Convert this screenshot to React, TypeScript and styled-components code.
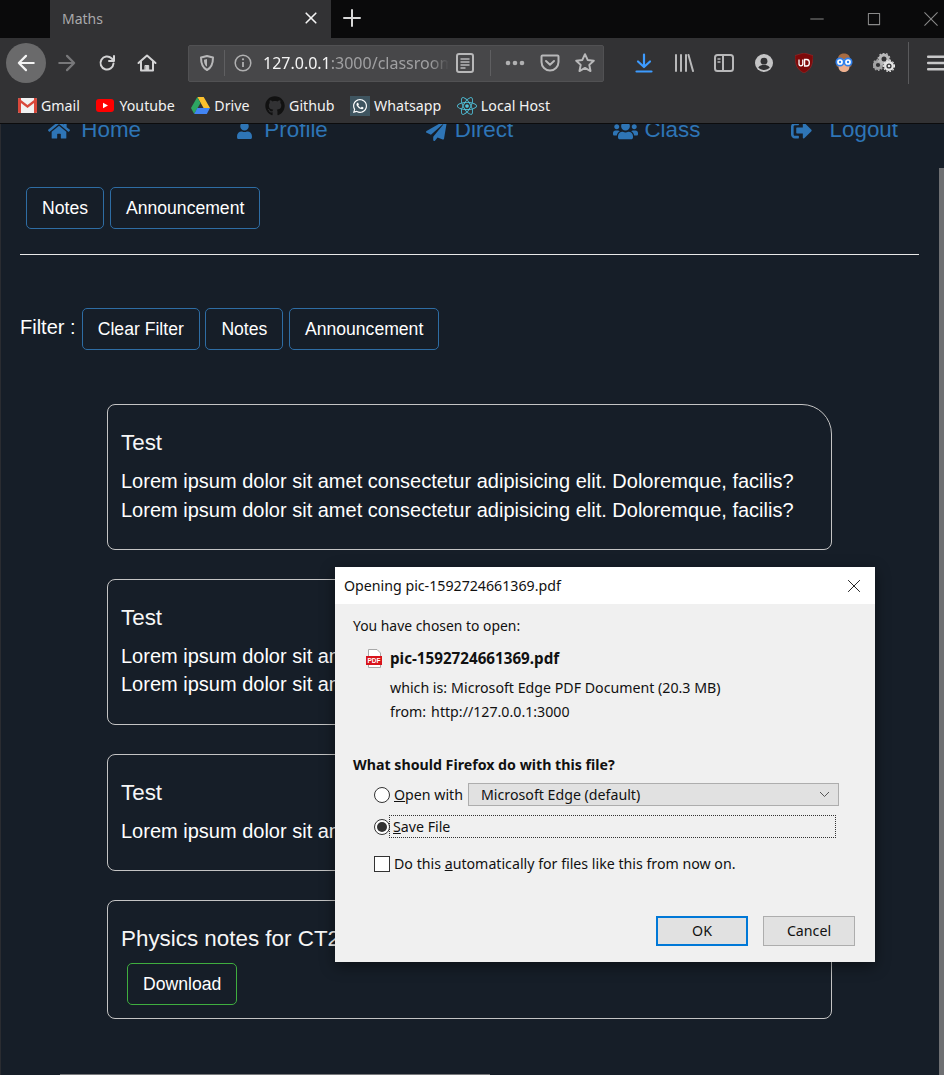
import React from "react"
import styled, { createGlobalStyle } from "styled-components"
import { FaGithub, FaHome, FaPaperPlane, FaReact, FaSignOutAlt, FaUser, FaUsers, FaWhatsapp } from "react-icons/fa"

const GlobalStyle = createGlobalStyle`
  html, body {
    margin: 0;
    padding: 0;
    background: #161e28;
  }
  * {
    box-sizing: border-box;
  }
`

const UI_FONT = `"Noto Sans", "Open Sans", sans-serif`
const PAGE_FONT = `"Liberation Sans", Arial, sans-serif`

const S = {
  Frame: styled.div`
    width: 944px;
    height: 1075px;
    display: flex;
    flex-direction: column;
    overflow: hidden;
    background: #161e28;
  `,
  Chrome: styled.header`
    flex: none;
    height: 124px;
    background: #323234;
    border-bottom: 1px solid #0c0c0d;
    font-family: ${UI_FONT};
    position: relative;
    z-index: 2;
  `,
  TabBar: styled.div`
    height: 38px;
    display: flex;
    align-items: center;
    padding-left: 50px;
    background: #0a0a0b;
  `,
  Tab: styled.div`
    width: 281px;
    height: 38px;
    display: flex;
    align-items: center;
    justify-content: space-between;
    padding: 0 12px 2px;
    background: #323234;
    color: #a9a9ab;
    font-size: 14px;
  `,
  NewTab: styled.div`
    width: 42px;
    height: 38px;
    padding-bottom: 2px;
    display: flex;
    align-items: center;
    justify-content: center;
  `,
  WindowControls: styled.div`
    margin-left: auto;
    display: flex;
    margin-right: -15px;
  `,
  WindowButton: styled.div`
    width: 57px;
    height: 36px;
    display: flex;
    align-items: center;
    justify-content: center;
  `,
  Toolbar: styled.div`
    height: 47px;
    display: flex;
    align-items: center;
    padding: 3px 0 0 6px;
    overflow: hidden;
  `,
  ToolButton: styled.div<{ $round?: boolean }>`
    flex: none;
    width: 40px;
    height: 40px;
    display: flex;
    align-items: center;
    justify-content: center;
    border-radius: 50%;
    background: ${(p) => (p.$round ? "#6a6a6b" : "transparent")};
    margin-right: ${(p) => (p.$round ? "1px" : "0")};
  `,
  UrlBar: styled.div`
    flex: none;
    width: 416px;
    height: 37px;
    margin: 0 20px 0 21px;
    display: flex;
    align-items: center;
    background: #474749;
    border: 1px solid #515153;
    border-radius: 2px;
  `,
  UrlSlot: styled.div<{ $width: number }>`
    flex: none;
    width: ${(p) => p.$width}px;
    height: 100%;
    display: flex;
    align-items: center;
    justify-content: center;
  `,
  UrlDivider: styled.div`
    flex: none;
    width: 1px;
    height: 26px;
    background: #5f5f61;
  `,
  UrlText: styled.div`
    flex: none;
    width: 186px;
    margin-left: 2px;
    overflow: hidden;
    white-space: nowrap;
    font-size: 16px;
    color: #a0a0a2;
    -webkit-mask-image: linear-gradient(to right, #000 90%, transparent);
    mask-image: linear-gradient(to right, #000 90%, transparent);
    b {
      font-weight: 400;
      color: #f4f4f4;
    }
  `,
  ToolDivider: styled.div`
    flex: none;
    width: 1px;
    height: 42px;
    margin: 0 7px 0 4px;
    background: #5a5a5c;
  `,
  Bookmarks: styled.nav`
    height: 38px;
    display: flex;
    align-items: center;
    gap: 15.6px;
    padding: 3px 0 0 17px;
  `,
  Bookmark: styled.div`
    display: flex;
    align-items: center;
    gap: 4px;
    font-size: 14.2px;
    color: #f2f2f2;
    white-space: nowrap;
  `,
  BookmarkIcon: styled.span<{ $bg?: string }>`
    width: 20px;
    height: 20px;
    display: flex;
    align-items: center;
    justify-content: center;
    background: ${(p) => p.$bg || "transparent"};
  `,
  Page: styled.main`
    flex: 1;
    position: relative;
    overflow: hidden;
    padding-left: 1px;
    border-left: 1px solid #2a2c31;
    font-family: ${PAGE_FONT};
    color: #fff;
  `,
  SiteNav: styled.nav`
    display: grid;
    grid-template-columns: repeat(5, 1fr);
    width: 937px;
    margin: -7px 0 0 -1px;
  `,
  NavLink: styled.a<{ $gap: number }>`
    display: flex;
    align-items: center;
    justify-content: center;
    gap: ${(p) => p.$gap}px;
    font-size: 22.4px;
    line-height: 26px;
    color: #2e75b6;
  `,
  ButtonRow: styled.div`
    display: flex;
    align-items: center;
    gap: 6px;
    margin: 44px 0 0 24px;
  `,
  FilterRow: styled.div`
    display: flex;
    align-items: center;
    gap: 5.6px;
    margin: 53px 0 0 18px;
  `,
  FilterLabel: styled.span`
    font-size: 20px;
    margin: -3px 0.6px 0 0;
  `,
  OutlineButton: styled.button<{ $tone?: string }>`
    height: 42px;
    padding: 0 15px;
    background: transparent;
    border: 1px solid ${(p) => p.$tone || "#2e6da4"};
    border-radius: 5px;
    color: #fff;
    font-family: ${PAGE_FONT};
    font-size: 17.6px;
  `,
  Divider: styled.hr`
    width: 899px;
    height: 1px;
    margin: 25px 0 0 18px;
    border: 0;
    background: #e8e8e8;
  `,
  CardList: styled.section`
    display: flex;
    flex-direction: column;
    gap: 28.8px;
    width: 725px;
    margin: 54px 0 0 105px;
  `,
  Card: styled.article<{ $first?: boolean }>`
    padding: 25px 13px 13px;
    border: 1px solid #c4c4c4;
    border-radius: ${(p) => (p.$first ? "8px 30px 8px 8px" : "8px")};
  `,
  CardTitle: styled.h3`
    margin: 0;
    font-size: 22.4px;
    line-height: 26px;
    font-weight: 400;
    color: #f6f6f6;
  `,
  CardBody: styled.p`
    margin: 11px 0 12px;
    font-size: 20px;
    line-height: 1.42857;
    color: #fff;
  `,
  DownloadRow: styled.div`
    margin: 11px 0 0 6px;
  `,
  ScrollThumb: styled.div`
    position: absolute;
    top: 44px;
    right: 0;
    bottom: 0;
    width: 5px;
    background: #6e6f72;
  `,
  ScrollBottom: styled.div`
    position: absolute;
    left: 59px;
    bottom: 0;
    width: 430px;
    height: 1px;
    background: #77787b;
  `,
  Dialog: styled.div`
    position: absolute;
    left: 334px;
    top: 443px;
    width: 540px;
    height: 395px;
    background: #f0f0f0;
    box-shadow: 0 4px 14px rgba(0, 0, 0, 0.45);
    font-family: ${UI_FONT};
    font-size: 14.2px;
    color: #111;
    display: flex;
    flex-direction: column;
  `,
  DialogTitle: styled.div`
    flex: none;
    height: 37px;
    display: flex;
    align-items: center;
    justify-content: space-between;
    padding: 0 14px 0 9px;
    background: #fff;
  `,
  DialogBody: styled.div`
    flex: 1;
    display: flex;
    flex-direction: column;
    padding: 12px 20px 16px 18px;
  `,
  Intro: styled.div`
    font-size: 13.9px;
  `,
  FileRow: styled.div`
    display: flex;
    align-items: center;
    gap: 7px;
    margin: 13px 0 0 13px;
    font-weight: 700;
    font-size: 15.2px;
  `,
  MetaRow: styled.div<{ $gap: number; $top: number }>`
    display: flex;
    gap: ${(p) => p.$gap}px;
    margin: ${(p) => p.$top}px 0 0 37px;
  `,
  Question: styled.div`
    margin-top: 34px;
    font-weight: 700;
  `,
  ChoiceRow: styled.div<{ $top: number }>`
    display: flex;
    align-items: center;
    margin: ${(p) => p.$top}px 0 0 21px;
    height: 23px;
  `,
  Radio: styled.span<{ $checked?: boolean }>`
    flex: none;
    width: 16px;
    height: 16px;
    border: 1px solid #333;
    border-radius: 50%;
    background: #fff;
    margin-right: 4px;
    display: flex;
    align-items: center;
    justify-content: center;
    &::after {
      content: "";
      width: 10px;
      height: 10px;
      border-radius: 50%;
      background: ${(p) => (p.$checked ? "#333" : "transparent")};
    }
  `,
  Check: styled.span`
    flex: none;
    width: 16px;
    height: 16px;
    border: 1px solid #333;
    background: #fff;
    margin-right: 4px;
  `,
  ChoiceLabel: styled.span`
    flex: none;
    width: 74px;
  `,
  SelectBox: styled.div`
    flex: none;
    width: 371px;
    height: 23px;
    padding: 0 8px 0 12px;
    display: flex;
    align-items: center;
    justify-content: space-between;
    background: #e1e1e1;
    border: 1px solid #adadad;
  `,
  Focused: styled.div`
    flex: none;
    width: 447px;
    height: 23px;
    margin-left: -5px;
    padding-left: 4px;
    display: flex;
    align-items: center;
    outline: 1px dotted #333;
    outline-offset: -1px;
  `,
  DialogActions: styled.div`
    margin-top: auto;
    display: flex;
    justify-content: flex-end;
    gap: 15px;
  `,
  DialogButton: styled.button<{ $primary?: boolean }>`
    width: 92px;
    height: 30px;
    padding: 0 0 2px;
    background: #e1e1e1;
    border: ${(p) => (p.$primary ? "2px solid #0078d7" : "1px solid #adadad")};
    color: #111;
    font-family: ${UI_FONT};
    font-size: 14.2px;
  `,
}

const Line: React.FC<{ d: string; color?: string; w?: number; size?: number }> = ({ d, color = "#d0d0d1", w = 2, size = 20 }) => (
  <svg width={size} height={size} viewBox="0 0 20 20" fill="none" stroke={color} strokeWidth={w} strokeLinecap="round" strokeLinejoin="round">
    <path d={d} />
  </svg>
)

const GmailIcon = () => (
  <svg width="19" height="15" viewBox="0 0 19 15">
    <rect width="19" height="15" rx="1.5" fill="#f1f1f1" />
    <path d="M0 1.5C0 .6.6 0 1.5 0H3v15H1.5C.6 15 0 14.400 0 13.500zM19 1.500C19 .6 18.400 0 17.500 0H16v15h1.500c.9 0 1.500-.6 1.500-1.500z" fill="#d9483b" />
    <path d="M1 0.500 9.500 7 18 .5v3L9.500 10 1 3.500z" fill="#d9483b" />
  </svg>
)

const YoutubeIcon = () => (
  <svg width="18" height="13" viewBox="0 0 18 13">
    <rect width="18" height="13" rx="3" fill="#f00" />
    <path d="M7 3.700 12 6.500 7 9.300z" fill="#fff" />
  </svg>
)

const DriveIcon = () => (
  <svg width="19" height="17" viewBox="0 0 19 17">
    <path d="M6.300 0h6.400l6.300 11h-6.400z" fill="#fbc02d" />
    <path d="M6.300 0 0 11l3.200 6 6.300-11z" fill="#2da562" />
    <path d="M3.200 17h12.600l3.200-6H6.400z" fill="#4285f4" />
  </svg>
)

const ShieldIcon = () => (
  <svg width="18" height="18" viewBox="0 0 18 18" fill="none">
    <path d="M9 2 3 3.500c0 6 1 10 6 12.500 5-2.500 6-6.500 6-12.500z" stroke="#b8b8b9" strokeWidth="2" strokeLinejoin="round" />
    <path d="M9 5 6 5.800c0 3 .6 5.500 3 7z" fill="#b8b8b9" />
  </svg>
)

const InfoIcon = () => (
  <svg width="18" height="18" viewBox="0 0 18 18" fill="none">
    <circle cx="9" cy="9" r="7.800" stroke="#b0b0b1" strokeWidth="1.500" />
    <path d="M9 8v5" stroke="#b0b0b1" strokeWidth="1.800" />
    <circle cx="9" cy="5.300" r="1.100" fill="#b0b0b1" />
  </svg>
)

const ReaderIcon = () => (
  <svg width="18" height="20" viewBox="0 0 18 20" fill="none" stroke="#b8b8b9">
    <rect x="1" y="1" width="16" height="18" rx="2" strokeWidth="2" />
    <path d="M4.500 6h9M4.500 9h9M4.500 12h9M4.500 15h5" strokeWidth="1.300" />
  </svg>
)

const DotsIcon = () => (
  <svg width="20" height="6" viewBox="0 0 20 6" fill="#b0b0b1">
    <circle cx="3" cy="3" r="2.300" />
    <circle cx="10" cy="3" r="2.300" />
    <circle cx="17" cy="3" r="2.300" />
  </svg>
)

const PocketIcon = () => (
  <svg width="20" height="18" viewBox="0 0 20 18" fill="none" stroke="#b8b8b9" strokeLinecap="round" strokeLinejoin="round">
    <path d="M2.500 1.500h15c.6 0 1 .4 1 1V8c0 4.500-3.800 8.500-8.500 8.500S1.500 12.500 1.500 8V2.500c0-.6.4-1 1-1z" strokeWidth="2" />
    <path d="M6 7l4 3.700L14 7" strokeWidth="2" />
  </svg>
)

const StarIcon = () => <Line size={22} d="M10 2l2.400 5.200 5.600.7-4.100 3.800 1.100 5.600L10 14.500l-5 2.800 1.100-5.600L2 7.900l5.600-.7z" color="#b8b8b9" w={1.800} />

const DownloadIcon = () => (
  <svg width="18" height="20" viewBox="0 0 18 20" fill="none" stroke="#3d9bff" strokeWidth="2.200" strokeLinecap="round" strokeLinejoin="round">
    <path d="M9 1.500v12M3 8.500l6 5.500 6-5.500M1.500 18.500h15" />
  </svg>
)

const LibraryIcon = () => (
  <svg width="20" height="18" viewBox="0 0 20 18" fill="none" stroke="#b8b8b9" strokeWidth="2">
    <path d="M2 1v16M7 1v16M12 1v16M14.500 1l4.500 16" strokeLinecap="round" />
  </svg>
)

const SidebarIcon = () => (
  <svg width="20" height="18" viewBox="0 0 20 18" fill="none" stroke="#b8b8b9">
    <rect x="1" y="1" width="18" height="16" rx="2.500" strokeWidth="2" />
    <path d="M9 1v16" strokeWidth="2" />
    <path d="M3.500 5h3M3.500 8h3" strokeWidth="1.500" />
  </svg>
)

const AccountIcon = () => (
  <svg width="18" height="18" viewBox="0 0 18 18">
    <circle cx="9" cy="9" r="9" fill="#c4c4c5" />
    <circle cx="9" cy="7.200" r="3.400" fill="#323234" />
    <path d="M3.200 13.600C4.500 11.600 6.600 11 9 11s4.500.6 5.800 2.600C13.400 15.200 11.300 16 9 16s-4.400-.8-5.800-2.400z" fill="#323234" />
  </svg>
)

const UBlockIcon = () => (
  <svg width="18" height="20" viewBox="0 0 18 20">
    <path d="M9 0 0 2.500c0 8 1.500 14 9 17.500 7.500-3.500 9-9.500 9-17.500z" fill="#7d0a0a" stroke="#9a2a2a" strokeWidth=".6" />
    <path d="M4 6.500v4.500c0 2.400 3.800 2.400 3.800 0V6.500M9.600 6.500h2.200c3.400 0 3.400 6.500 0 6.500H9.600z" fill="none" stroke="#fff" strokeWidth="1.300" />
  </svg>
)

const AvatarIcon = () => (
  <svg width="20" height="20" viewBox="0 0 20 20">
    <path d="M4 6c0-4 3-5.500 6-5.500S16 2 16 6l1.500 7c-1 1-2 1-3 .5H5.500c-1 .5-2 .5-3-.5z" fill="#a86c42" />
    <path d="M4.500 6.500h11V14c0 3-2.700 5-5.500 5s-5.500-2-5.500-5z" fill="#eeb08f" />
    <circle cx="6" cy="9" r="3.700" fill="#fff" stroke="#2f80ed" strokeWidth="1.700" />
    <circle cx="14" cy="9" r="3.700" fill="#fff" stroke="#2f80ed" strokeWidth="1.700" />
    <circle cx="6" cy="9" r="1.200" fill="#2f80ed" />
    <circle cx="14" cy="9" r="1.200" fill="#2f80ed" />
  </svg>
)

const GearsIcon = () => (
  <svg width="22" height="20" viewBox="0 0 22 20" fill="none">
    <circle cx="5" cy="12" r="3.600" stroke="#a2a2a3" strokeWidth="3" />
    <circle cx="5" cy="12" r="5.200" stroke="#a2a2a3" strokeWidth="1.400" strokeDasharray="1.600 1.600" />
    <circle cx="11" cy="6" r="4" stroke="#b8b8b9" strokeWidth="3" />
    <circle cx="11" cy="6" r="5.800" stroke="#b8b8b9" strokeWidth="1.400" strokeDasharray="1.800 1.800" />
    <circle cx="16" cy="13" r="3.800" fill="#323234" stroke="#e6e6e6" strokeWidth="2.400" />
    <circle cx="16" cy="13" r="5.500" stroke="#e6e6e6" strokeWidth="1.200" strokeDasharray="1.600 1.600" />
    <circle cx="16" cy="13" r="1.300" fill="#e6e6e6" />
  </svg>
)

const HamburgerIcon = () => (
  <svg width="18" height="16" viewBox="0 0 18 16" fill="#c8c8c9">
    <rect y="0.500" width="18" height="2.400" rx="1" />
    <rect y="6.800" width="18" height="2.400" rx="1" />
    <rect y="13" width="18" height="2.400" rx="1" />
  </svg>
)

const PdfIcon = () => (
  <svg width="17" height="19" viewBox="0 0 17 19">
    <path d="M2.500.5H11l3.500 3.500v14.500h-12z" fill="#fff" stroke="#a8a8a8" />
    <rect y="7" width="16" height="9" fill="#d8131b" />
    <text x="8" y="14" textAnchor="middle" fontFamily={PAGE_FONT} fontWeight="700" fontSize="6.500" fill="#fff">PDF</text>
  </svg>
)

const bookmarks = [
  { name: "Gmail", icon: <GmailIcon /> },
  { name: "Youtube", icon: <YoutubeIcon /> },
  { name: "Drive", icon: <DriveIcon /> },
  { name: "Github", icon: <FaGithub size={20} color="#111" /> },
  { name: "Whatsapp", icon: <FaWhatsapp size={16} color="#fff" />, bg: "#3f5560" },
  { name: "Local Host", icon: <FaReact size={20} color="#4fc3dc" /> },
]

const navLinks = [
  { label: "Home", icon: <FaHome size={22} />, gap: 11 },
  { label: "Profile", icon: <FaUser size={17} />, gap: 11 },
  { label: "Direct", icon: <FaPaperPlane size={21} />, gap: 8 },
  { label: "Class", icon: <FaUsers size={25} />, gap: 6 },
  { label: "Logout", icon: <FaSignOutAlt size={21} />, gap: 18 },
]

const cards = [
  { title: "Test", lines: 2 },
  { title: "Test", lines: 2 },
  { title: "Test", lines: 1 },
]

const LOREM = "Lorem ipsum dolor sit amet consectetur adipisicing elit. Doloremque, facilis?"

const BrowserChrome = () => (
  <S.Chrome>
    <S.TabBar>
      <S.Tab>
        <span>Maths</span>
        <Line size={16} d="M4 4l12 12M16 4L4 16" color="#f4f4f4" w={2} />
      </S.Tab>
      <S.NewTab>
        <Line size={20} d="M10 2v16M2 10h16" color="#d8d8d8" w={2} />
      </S.NewTab>
      <S.WindowControls>
        <S.WindowButton>
          <Line size={14} d="M1 10h18" color="#8a8a8a" w={1.400} />
        </S.WindowButton>
        <S.WindowButton>
          <Line size={14} d="M2 2h16v16H2z" color="#8a8a8a" w={1.500} />
        </S.WindowButton>
        <S.WindowButton>
          <Line size={14} d="M1 1l18 18M19 1L1 19" color="#8a8a8a" w={1.500} />
        </S.WindowButton>
      </S.WindowControls>
    </S.TabBar>
    <S.Toolbar>
      <S.ToolButton $round>
        <Line size={22} d="M17 10H3.500M10 3.500 3.500 10l6.500 6.500" color="#f4f4f4" />
      </S.ToolButton>
      <S.ToolButton>
        <Line size={22} d="M3 10h13.500M10 3.500l6.500 6.500-6.500 6.500" color="#78787a" />
      </S.ToolButton>
      <S.ToolButton>
        <Line size={20} d="M16.500 10.500a6.500 6.500 0 1 1-2-5.200L17 8M17 3v5h-5" color="#d4d4d5" />
      </S.ToolButton>
      <S.ToolButton>
        <svg width="20" height="20" viewBox="0 0 20 20" fill="none" stroke="#d4d4d5" strokeWidth="2" strokeLinecap="round" strokeLinejoin="round">
          <path d="M1.500 10 10 2.500l8.500 7.500M4 8.500V17.500h12V8.500" />
          <rect x="8.300" y="12.500" width="3.400" height="5" fill="#d4d4d5" strokeWidth="1" />
        </svg>
      </S.ToolButton>
      <S.UrlBar>
        <S.UrlSlot $width={35}>
          <ShieldIcon />
        </S.UrlSlot>
        <S.UrlDivider />
        <S.UrlSlot $width={36}>
          <InfoIcon />
        </S.UrlSlot>
        <S.UrlText>
          <b>127.0.0.1</b>:3000/classroom
        </S.UrlText>
        <S.UrlSlot $width={32}>
          <ReaderIcon />
        </S.UrlSlot>
        <S.UrlSlot $width={9} />
        <S.UrlDivider />
        <S.UrlSlot $width={48}>
          <DotsIcon />
        </S.UrlSlot>
        <S.UrlSlot $width={21}>
          <PocketIcon />
        </S.UrlSlot>
        <S.UrlSlot $width={49}>
          <StarIcon />
        </S.UrlSlot>
      </S.UrlBar>
      <S.ToolButton>
        <DownloadIcon />
      </S.ToolButton>
      <S.ToolButton>
        <LibraryIcon />
      </S.ToolButton>
      <S.ToolButton>
        <SidebarIcon />
      </S.ToolButton>
      <S.ToolButton>
        <AccountIcon />
      </S.ToolButton>
      <S.ToolButton>
        <UBlockIcon />
      </S.ToolButton>
      <S.ToolButton>
        <AvatarIcon />
      </S.ToolButton>
      <S.ToolButton>
        <GearsIcon />
      </S.ToolButton>
      <S.ToolDivider />
      <S.ToolButton>
        <HamburgerIcon />
      </S.ToolButton>
    </S.Toolbar>
    <S.Bookmarks>
      {bookmarks.map((b) => (
        <S.Bookmark key={b.name}>
          <S.BookmarkIcon $bg={b.bg}>{b.icon}</S.BookmarkIcon>
          {b.name}
        </S.Bookmark>
      ))}
    </S.Bookmarks>
  </S.Chrome>
)

const OpeningDialog = () => (
  <S.Dialog>
    <S.DialogTitle>
      <span>Opening pic-1592724661369.pdf</span>
      <Line size={14} d="M2 2l16 16M18 2L2 18" color="#222" w={1.400} />
    </S.DialogTitle>
    <S.DialogBody>
      <S.Intro>You have chosen to open:</S.Intro>
      <S.FileRow>
        <PdfIcon />
        pic-1592724661369.pdf
      </S.FileRow>
      <S.MetaRow $gap={4} $top={10}>
        <span>which is:</span>
        <span>Microsoft Edge PDF Document (20.3 MB)</span>
      </S.MetaRow>
      <S.MetaRow $gap={5} $top={5}>
        <span>from:</span>
        <span>http://127.0.0.1:3000</span>
      </S.MetaRow>
      <S.Question>What should Firefox do with this file?</S.Question>
      <S.ChoiceRow $top={9}>
        <S.Radio />
        <S.ChoiceLabel>
          <u>O</u>pen with
        </S.ChoiceLabel>
        <S.SelectBox>
          Microsoft Edge (default)
          <svg width="11" height="7" viewBox="0 0 11 7" fill="none" stroke="#555">
            <path d="M1 1l4.500 4.500L10 1" />
          </svg>
        </S.SelectBox>
      </S.ChoiceRow>
      <S.ChoiceRow $top={9}>
        <S.Radio $checked />
        <S.Focused>
          <span>
            <u>S</u>ave File
          </span>
        </S.Focused>
      </S.ChoiceRow>
      <S.ChoiceRow $top={14}>
        <S.Check />
        <span>
          Do this <u>a</u>utomatically for files like this from now on.
        </span>
      </S.ChoiceRow>
      <S.DialogActions>
        <S.DialogButton $primary>OK</S.DialogButton>
        <S.DialogButton>Cancel</S.DialogButton>
      </S.DialogActions>
    </S.DialogBody>
  </S.Dialog>
)

export default function App() {
  return (
    <S.Frame>
      <GlobalStyle />
      <BrowserChrome />
      <S.Page>
        <S.SiteNav>
          {navLinks.map((l) => (
            <S.NavLink key={l.label} $gap={l.gap}>
              {l.icon}
              {l.label}
            </S.NavLink>
          ))}
        </S.SiteNav>
        <S.ButtonRow>
          <S.OutlineButton>Notes</S.OutlineButton>
          <S.OutlineButton>Announcement</S.OutlineButton>
        </S.ButtonRow>
        <S.Divider />
        <S.FilterRow>
          <S.FilterLabel>Filter :</S.FilterLabel>
          <S.OutlineButton>Clear Filter</S.OutlineButton>
          <S.OutlineButton>Notes</S.OutlineButton>
          <S.OutlineButton>Announcement</S.OutlineButton>
        </S.FilterRow>
        <S.CardList>
          {cards.map((c, i) => (
            <S.Card key={i} $first={i === 0}>
              <S.CardTitle>{c.title}</S.CardTitle>
              <S.CardBody>
                {Array.from({ length: c.lines }).map((_, n) => (
                  <React.Fragment key={n}>
                    {LOREM}
                    <br />
                  </React.Fragment>
                ))}
              </S.CardBody>
            </S.Card>
          ))}
          <S.Card>
            <S.CardTitle>Physics notes for CT2</S.CardTitle>
            <S.DownloadRow>
              <S.OutlineButton $tone="#3fae3f">Download</S.OutlineButton>
            </S.DownloadRow>
          </S.Card>
        </S.CardList>
        <S.ScrollThumb />
        <S.ScrollBottom />
        <OpeningDialog />
      </S.Page>
    </S.Frame>
  )
}
